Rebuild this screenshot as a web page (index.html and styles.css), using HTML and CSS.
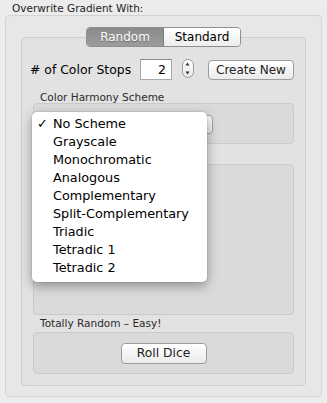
FILE: index.html
```html
<!DOCTYPE html>
<html>
<head>
<meta charset="utf-8">
<link rel="stylesheet" href="styles.css">
</head>
<body>
<div class="title">Overwrite Gradient With:</div>
<div class="outer">
  <div class="seg">
    <div class="seg-item active">Random</div>
    <div class="seg-item">Standard</div>
  </div>
  <div class="tabbox">
    <div class="row">
      <span class="row-label"># of Color Stops</span>
      <span class="field">2</span>
      <span class="stepper">
        <svg width="11" height="19" viewBox="0 0 11 19"><path d="M3.5 6.5 L5.5 3.5 L7.5 6.5 Z" fill="#333"/><path d="M3.5 12.5 L5.5 15.5 L7.5 12.5 Z" fill="#333"/></svg>
      </span>
      <span class="btn create">Create New</span>
    </div>
    <div class="label lbl1">Color Harmony Scheme</div>
    <div class="group g1">
      <div class="popup"></div>
    </div>
    <div class="label lbl2"></div>
    <div class="group g2"></div>
    <div class="label lbl3">Totally Random – Easy!</div>
    <div class="group g3">
      <span class="btn roll">Roll Dice</span>
    </div>
  </div>
</div>
<div class="menu">
  <div class="item"><span class="check">✓</span>No Scheme</div>
  <div class="item">Grayscale</div>
  <div class="item">Monochromatic</div>
  <div class="item">Analogous</div>
  <div class="item">Complementary</div>
  <div class="item">Split-Complementary</div>
  <div class="item">Triadic</div>
  <div class="item">Tetradic 1</div>
  <div class="item">Tetradic 2</div>
</div>
</body>
</html>
```
FILE: styles.css
```css
html, body {
  margin: 0;
  background: #ececec;
}
body {
  padding: 2px 5px 0 5px;
  font-family: "DejaVu Sans", "Liberation Sans", sans-serif;
  color: #111;
  position: relative;
}
.title {
  height: 13px;
  line-height: 13px;
  font-size: 10.5px;
  color: #222;
  padding-left: 7px;
}
.outer {
  box-sizing: border-box;
  width: 317px;
  border: 1px solid #d2d2d2;
  border-radius: 4px;
  background: #e7e7e7;
  padding: 11px 15px 10px 15px;
}
.seg {
  display: flex;
  width: 155px;
  height: 20px;
  margin: 0 auto -10px auto;
  position: relative;
  z-index: 1;
  box-sizing: border-box;
  border: 1px solid #8f8f8f;
  border-radius: 4px;
  overflow: hidden;
  font-size: 12px;
}
.seg-item {
  display: flex;
  align-items: center;
  justify-content: center;
  height: 100%;
}
.seg-item.active {
  width: 76px;
  background: linear-gradient(#8a8a8a, #9c9c9c);
  color: #fff;
  text-shadow: 0 1px 0 #6a6a6a;
  border-right: 1px solid #7d7d7d;
}
.seg-item:not(.active) {
  flex: 1;
  background: linear-gradient(#ffffff, #ededed);
  color: #000;
}
.tabbox {
  box-sizing: border-box;
  border: 1px solid #cdcdcd;
  border-radius: 4px;
  background: #e2e2e2;
  padding: 21px 11px 11px 11px;
}
.row {
  display: flex;
  align-items: center;
  height: 21px;
  margin-left: -3px;
}
.row-label {
  font-size: 12.4px;
  color: #000;
  width: 110px;
}
.field {
  box-sizing: border-box;
  width: 32px;
  height: 21px;
  background: #fff;
  border: 1px solid #a9a9a9;
  border-top-color: #8e8e8e;
  text-align: right;
  padding-right: 5px;
  font-size: 12.5px;
  line-height: 19px;
  color: #000;
}
.stepper {
  box-sizing: border-box;
  margin-left: 10px;
  width: 12px;
  height: 19px;
  border: 1px solid #9c9c9c;
  border-radius: 6px;
  background: linear-gradient(#ffffff, #e8e8e8);
  display: flex;
  align-items: center;
  justify-content: center;
  margin-top: -2px;
}
.stepper svg {
  display: block;
  margin-left: -1px;
}
.btn {
  box-sizing: border-box;
  display: flex;
  align-items: center;
  justify-content: center;
  border: 1px solid #9d9d9d;
  border-radius: 4px;
  background: linear-gradient(#ffffff, #ebebeb);
  font-size: 12px;
  color: #222;
}
.create {
  margin-left: auto;
  width: 86px;
  height: 20px;
  margin-top: 1px;
}
.label {
  font-size: 10.5px;
  color: #2a2a2a;
  padding-left: 7px;
}
.lbl1 {
  margin-top: 11px;
  height: 12px;
  line-height: 12px;
}
.lbl2 {
  height: 20px;
}
.lbl3 {
  height: 17px;
  line-height: 17px;
}
.group {
  box-sizing: border-box;
  border: 1px solid #cacaca;
  border-radius: 4px;
  background: #dadada;
}
.g1 {
  height: 41px;
  padding: 11px 0 0 8px;
}
.popup {
  box-sizing: border-box;
  width: 171px;
  height: 19px;
  border: 1px solid #a2a2a2;
  border-radius: 4px;
  background: linear-gradient(#ffffff, #ececec);
}
.g2 {
  height: 151px;
}
.g3 {
  height: 42px;
  display: flex;
  align-items: center;
  justify-content: center;
}
.roll {
  width: 86px;
  height: 21px;
  font-size: 12.3px;
}
.menu {
  position: absolute;
  left: 32px;
  top: 112px;
  width: 175px;
  box-sizing: border-box;
  padding: 3px 0 5px 0;
  background: #fff;
  border-radius: 5px;
  box-shadow: 0 4px 12px rgba(0, 0, 0, 0.35), 0 0 0 1px rgba(0, 0, 0, 0.06);
}
.item {
  position: relative;
  height: 18px;
  line-height: 18px;
  padding-left: 21px;
  font-size: 12.8px;
  color: #000;
}
.check {
  position: absolute;
  left: 5px;
  top: 0;
  font-size: 13px;
  font-weight: bold;
}
```
